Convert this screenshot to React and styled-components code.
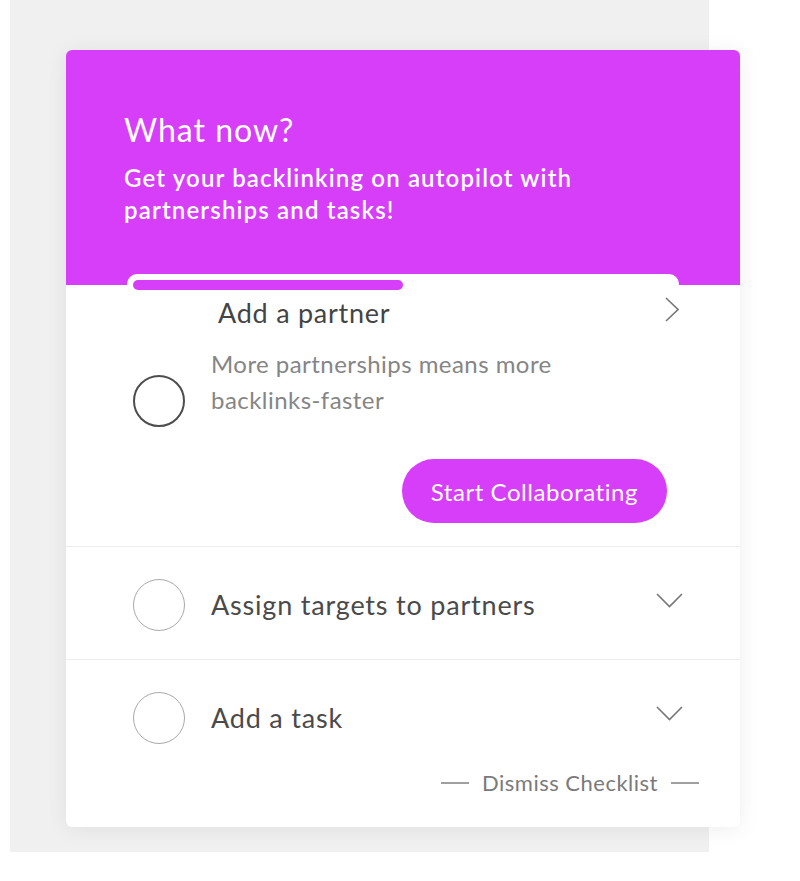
import React from "react";
import styled, { createGlobalStyle } from "styled-components";

const PURPLE = "#d63ef9";

const Global = createGlobalStyle`
  html, body { margin: 0; padding: 0; background: #ffffff; }
  body { font-family: "Lato", "Noto Sans", sans-serif; }
  * { box-sizing: border-box; }
`;

const Page = styled.div`
  padding-left: 10px;
  background: #ffffff;
`;

const Backdrop = styled.div`
  width: 699px;
  background: #f0f0f0;
  padding: 50px 0 25px 56px;
`;

const Card = styled.div`
  width: 674px;
  background: #ffffff;
  border-radius: 6px;
  overflow: hidden;
  box-shadow: 0 2px 22px rgba(0, 0, 0, 0.07);
  padding-bottom: 32px;
`;

const Header = styled.div`
  height: 235px;
  background: ${PURPLE};
  padding: 60px 58px 0 58px;
  color: #ffffff;
`;

const Title = styled.h1`
  margin: 0;
  font-size: 32px;
  line-height: 40px;
  font-weight: 400;
  letter-spacing: 1px;
`;

const Subtitle = styled.p`
  margin: 12px 0 0;
  font-size: 24px;
  line-height: 32px;
  font-weight: 600;
  letter-spacing: 1.15px;
  max-width: 510px;
`;

const Tab = styled.div`
  position: relative;
  margin: -11px 61px 0;
  background: #ffffff;
  border-radius: 10px 10px 0 0;
  padding: 6px 0 0 6px;
`;

const Progress = styled.div`
  width: 270px;
  height: 10px;
  border-radius: 5px;
  background: ${PURPLE};
`;

const ItemHead = styled.div`
  display: flex;
  align-items: flex-start;
  justify-content: space-between;
  margin-top: 6px;
  padding-left: 85px;
`;

const ItemTitle = styled.span`
  font-size: 27px;
  line-height: 34px;
  letter-spacing: 0.75px;
  color: #444444;
`;

const Chevron = styled.svg`
  display: block;
  flex: none;
  margin-top: ${(p) => p.$top || 0}px;
  margin-right: ${(p) => p.$right || 0}px;
`;

const ExpandedBody = styled.div`
  padding: 16px 73px 23px 67px;
`;

const ContentRow = styled.div`
  display: flex;
  align-items: flex-start;
  gap: 26px;
`;

const Check = styled.div`
  flex: none;
  width: 52px;
  height: 52px;
  border-radius: 50%;
  border: ${(p) => (p.$active ? "2px solid #4d4d4d" : "1.5px solid #a9a9a9")};
  margin-top: ${(p) => p.$top || 0}px;
`;

const Description = styled.p`
  margin: 0;
  font-size: 24px;
  line-height: 36px;
  letter-spacing: 0.45px;
  color: #858585;
  max-width: 370px;
`;

const Actions = styled.div`
  display: flex;
  justify-content: flex-end;
  margin-top: 32px;
`;

const PrimaryButton = styled.button`
  height: 64px;
  padding: 0 29px;
  border: none;
  border-radius: 32px;
  background: ${PURPLE};
  color: #ffffff;
  font-family: "Lato", "Noto Sans", sans-serif;
  font-size: 24px;
  letter-spacing: 0.55px;
  cursor: pointer;
`;

const Row = styled.div`
  display: flex;
  align-items: center;
  gap: 26px;
  border-top: 1px solid #ececec;
  padding: 32px 57px ${(p) => (p.$last ? 22 : 28)}px 67px;
`;

const RowTitle = styled.span`
  flex: 1;
  font-size: 27px;
  line-height: 34px;
  letter-spacing: 0.8px;
  color: #4a4a4a;
`;

const Dismiss = styled.div`
  display: flex;
  align-items: center;
  justify-content: flex-end;
  gap: 13px;
  margin-top: 5px;
  padding-right: 41px;
  font-size: 22px;
  line-height: 24px;
  letter-spacing: 0.5px;
  color: #7a7a7a;
`;

const Rule = styled.span`
  width: 28px;
  height: 1.5px;
  background: #a0a0a0;
`;

const ChevronRight = () => (
  <Chevron width="14" height="26" viewBox="0 0 14 26" $top={1}>
    <polyline points="1,1 13,12.5 1,24" fill="none" stroke="#777" strokeWidth="1.6" />
  </Chevron>
);

const ChevronDown = () => (
  <Chevron width="27" height="15" viewBox="0 0 27 15" $top={-10}>
    <polyline points="1,1 13.5,13.5 26,1" fill="none" stroke="#777" strokeWidth="1.6" />
  </Chevron>
);

const rows = ["Assign targets to partners", "Add a task"];

export default function App() {
  return (
    <>
      <Global />
      <Page>
        <Backdrop>
          <Card>
            <Header>
              <Title>What now?</Title>
              <Subtitle>Get your backlinking on autopilot with partnerships and tasks!</Subtitle>
            </Header>
            <Tab>
              <Progress />
              <ItemHead>
                <ItemTitle>Add a partner</ItemTitle>
                <ChevronRight />
              </ItemHead>
            </Tab>
            <ExpandedBody>
              <ContentRow>
                <Check $active $top={29} />
                <Description>More partnerships means more backlinks-faster</Description>
              </ContentRow>
              <Actions>
                <PrimaryButton>Start Collaborating</PrimaryButton>
              </Actions>
            </ExpandedBody>
            {rows.map((r, i) => (
              <Row key={r} $last={i === rows.length - 1}>
                <Check />
                <RowTitle>{r}</RowTitle>
                <ChevronDown />
              </Row>
            ))}
            <Dismiss>
              <Rule />
              <span>Dismiss Checklist</span>
              <Rule />
            </Dismiss>
          </Card>
        </Backdrop>
      </Page>
    </>
  );
}
